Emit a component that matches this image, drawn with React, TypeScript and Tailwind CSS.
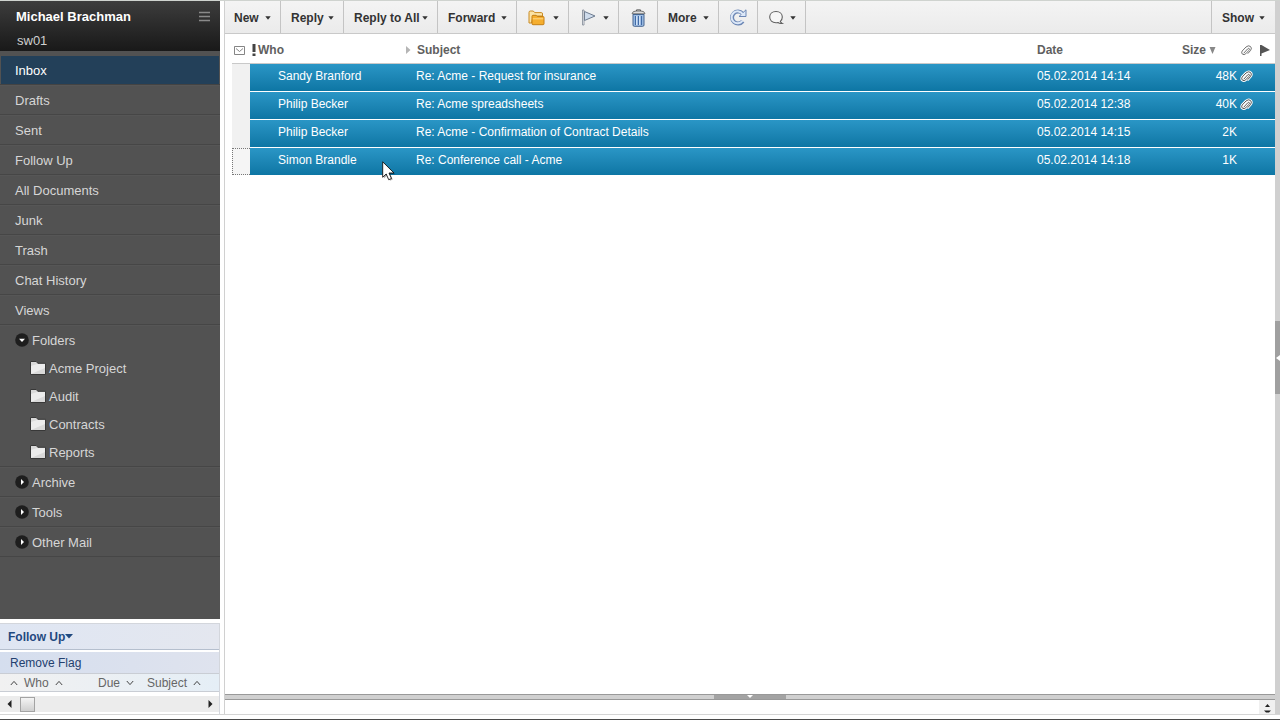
import type { ReactNode } from "react";

const views = [
  "Drafts",
  "Sent",
  "Follow Up",
  "All Documents",
  "Junk",
  "Trash",
  "Chat History",
  "Views",
];
const folders = ["Acme Project", "Audit", "Contracts", "Reports"];
const closedGroups = ["Archive", "Tools", "Other Mail"];

const mails = [
  { who: "Sandy Branford", subject: "Re: Acme - Request for insurance", date: "05.02.2014 14:14", size: "48K", clip: true },
  { who: "Philip Becker", subject: "Re: Acme spreadsheets", date: "05.02.2014 12:38", size: "40K", clip: true },
  { who: "Philip Becker", subject: "Re: Acme - Confirmation of Contract Details", date: "05.02.2014 14:15", size: "2K", clip: false },
  { who: "Simon Brandle", subject: "Re: Conference call - Acme", date: "05.02.2014 14:18", size: "1K", clip: false },
];

function Caret() {
  return (
    <svg width="6" height="4" viewBox="0 0 6 4" className="shrink-0" aria-hidden="true">
      <path d="M0.300 0.300h5.400L3 3.700z" fill="#333" />
    </svg>
  );
}

function ToolButton({ label, children, menu = true, className = "" }: {
  label: string;
  children?: ReactNode;
  menu?: boolean;
  className?: string;
}) {
  return (
    <button
      type="button"
      aria-label={label}
      className={`flex h-8 items-center justify-between border-[#c4c4c4] pt-px pr-[9px] whitespace-nowrap ${className}`}
    >
      {children ?? label}
      {menu && <Caret />}
    </button>
  );
}

function FolderStackIcon() {
  return (
    <svg width="17" height="16" viewBox="0 0 17 16" aria-hidden="true">
      <path d="M1 13V2.5Q1 1 2.3 1h3l1.4 1.6h6.8Q14.5 2.600 14.500 4v2H5L3.500 13z" fill="#fbe3a6" stroke="#c98a22" />
      <path d="M4 13.800V6.300Q4 5.300 5 5.300h3.200l1 1.200h6Q16 6.500 16 7.500v6.300q0 .900-1 .900H5q-1 0-1-.900z" fill="#f5ae2e" stroke="#c47f16" />
      <path d="M4.800 8.800h10.500" stroke="#ffd98a" />
    </svg>
  );
}

function FlagIcon() {
  return (
    <svg width="16" height="17" viewBox="0 0 16 17" aria-hidden="true">
      <path d="M3.500 2.500L14 7 3.500 11.500z" fill="#cfdcec" stroke="#6d7c90" />
      <path d="M1.500 1h1.500v15H1.500z" fill="#f5f7fa" stroke="#7d8793" strokeWidth=".8" />
    </svg>
  );
}

function TrashIcon() {
  return (
    <svg width="15" height="18" viewBox="0 0 15 18" aria-hidden="true">
      <path d="M5.500 2V.900h4V2" fill="none" stroke="#555" />
      <path d="M1 4.800Q1.500 2 5 2h5q3.500 0 4 2.800z" fill="#dedede" stroke="#666" strokeWidth=".9" />
      <path d="M2 5.500h11V16q0 1.300-1.300 1.300H3.300Q2 17.300 2 16z" fill="#9fbfe6" stroke="#46658f" />
      <path d="M4.500 7v9M7.500 7v9M10.500 7v9" stroke="#416ba6" strokeWidth="1.200" />
      <path d="M5.700 7v9M8.700 7v9" stroke="#dceafb" />
    </svg>
  );
}

function RefreshIcon() {
  return (
    <svg width="18" height="17" viewBox="0 0 18 17" aria-hidden="true">
      <path d="M13.800 12.200A6 6 0 1 1 13.500 4.500" fill="none" stroke="#6c87b5" strokeWidth="4" />
      <path d="M10 7.500h7V.800z" fill="#dce8f8" stroke="#6c87b5" strokeWidth="1" />
      <path d="M13.400 11.900A6 6 0 1 1 13.700 5.200" fill="none" stroke="#dce8f8" strokeWidth="2" />
    </svg>
  );
}

function ChatIcon() {
  return (
    <svg width="17" height="16" viewBox="0 0 17 16" aria-hidden="true">
      <path d="M8 1.500c3.800 0 6.300 2.300 6.300 5.600 0 1.900-.800 3.400-2 4.300.300.900.800 1.600 1.900 2-1.500.300-3 .100-4.200-.900-.600.200-1.300.300-2 .300C4.200 12.800 1.700 10.400 1.700 7.100S4.200 1.500 8 1.500z" fill="#f7f7f7" stroke="#5f5f5f" strokeWidth="1.100" />
    </svg>
  );
}

function PaperclipIcon({ halo = false }: { halo?: boolean }) {
  const d = "M4.300 9.600L8.300 5.200Q9.500 4.200 10 5T9.600 6.800L6.200 10.500Q4.300 12.200 2.700 11T2.300 7.600L6.500 3.200Q9.200 1 11.200 2.600T11.500 6.800L8.600 10.100";
  return (
    <svg width="13" height="13" viewBox="0 0 14 14" className="block" aria-hidden="true">
      {halo && <path d={d} fill="#e9eef1" stroke="#fff" strokeWidth="2.800" strokeLinecap="round" />}
      <path d={d} fill="none" stroke={halo ? "#4a4a4a" : "#666"} strokeWidth="1" strokeLinecap="round" />
    </svg>
  );
}

function Twisty({ open }: { open: boolean }) {
  return (
    <svg width="14" height="14" viewBox="0 0 14 14" className="shrink-0" aria-hidden="true">
      <circle cx="7" cy="7" r="6.800" fill="#1e1e1e" />
      <path d={open ? "M4 5.800h6L7 9z" : "M6 4v6l3-3z"} fill="#fff" />
    </svg>
  );
}

function FolderIcon() {
  return (
    <svg width="16" height="14" viewBox="0 0 16 14" aria-hidden="true">
      <path d="M.500 13.500V.500h5.800l1.500 1.800h7.700v11.200z" fill="#d9d9d9" stroke="#383838" />
      <path d="M1 13V5l6-2h8v4z" fill="#ececec" />
    </svg>
  );
}

function Chevron({ down = false }: { down?: boolean }) {
  return (
    <svg width="8" height="6" viewBox="0 0 8 6" aria-hidden="true">
      <path d={down ? "M.800 1L4 4.600 7.200 1" : "M.800 5L4 1.400 7.200 5"} fill="none" stroke="#444" />
    </svg>
  );
}

function Sidebar() {
  return (
    <aside className="flex w-[220px] shrink-0 flex-col">
      <header className="flex h-[50px] flex-col bg-linear-to-b from-[#3d3d3d] to-[#191919] text-white">
        <div className="flex h-[30px] items-center justify-between pt-px pr-[10px] pl-4">
          <h1 className="text-[13px] font-bold">Michael Brachman</h1>
          <button type="button" aria-label="Menu">
            <svg width="11" height="11" viewBox="0 0 11 11" className="block" aria-hidden="true">
              <path d="M0 1.500h11M0 5.500h11M0 9.500h11" stroke="#8a8a8a" strokeWidth="1.600" />
            </svg>
          </button>
        </div>
        <div className="flex h-5 items-center pl-[17px] text-[13px] text-[#d0d0d0]">sw01</div>
      </header>

      <nav className="grow bg-[#525252] pt-1 text-[13px] text-[#d6d6d6]">
        <ul>
          <li className="border-b border-[#434343] px-px pt-px">
            <a href="#inbox" className="flex h-7 items-center bg-[#234059] pt-px pl-[14px] text-white">Inbox</a>
          </li>
          {views.map((name) => (
            <li key={name} className="border-t border-b border-t-[#565656] border-b-[#464646]">
              <a href="#view" className="flex h-7 items-center pt-[2px] pl-[15px]">{name}</a>
            </li>
          ))}
          <li className="border-t border-b border-t-[#565656] border-b-[#464646]">
            <button type="button" aria-expanded="true" className="flex h-7 w-full items-center gap-[3px] pl-[15px]">
              <Twisty open />
              <span className="pt-[2px]">Folders</span>
            </button>
            <ul>
              {folders.map((name) => (
                <li key={name}>
                  <a href="#folder" className="flex h-7 items-center gap-[3px] pl-[30px]">
                    <FolderIcon />
                    <span className="pt-[2px]">{name}</span>
                  </a>
                </li>
              ))}
            </ul>
          </li>
          {closedGroups.map((name) => (
            <li key={name} className="border-t border-b border-t-[#565656] border-b-[#464646]">
              <button type="button" aria-expanded="false" className="flex h-7 w-full items-center gap-[3px] pl-[15px]">
                <Twisty open={false} />
                <span className="pt-[2px]">{name}</span>
              </button>
            </li>
          ))}
        </ul>
      </nav>

      <section className="mt-1 flex flex-col border-t border-r border-[#d3d6dc] bg-white">
        <button type="button" className="flex h-[26px] items-center border-b border-[#b5bfce] bg-linear-to-r from-[#dfe6f3] to-[#e4e7ef] pl-2 text-[12px] font-bold text-[#1f497f]">
          Follow Up
          <svg width="8" height="5" viewBox="0 0 8 5" aria-hidden="true">
            <path d="M0 0h8L4 4.500z" fill="#1f497f" />
          </svg>
        </button>
        <button type="button" className="mt-[2px] flex h-[22px] items-center border-b border-[#c9cdd4] bg-linear-to-r from-[#d5deee] to-[#dfe3ee] pl-[10px] text-[12px] text-[#23406e]">
          Remove Flag
        </button>
        <div className="flex h-[18px] items-center border-b border-[#c9cdd4] bg-linear-to-r from-[#f1f1f1] to-[#e5eef6] pl-[10px] text-[12px] text-[#666]">
          <div className="flex w-[88px] items-center gap-[6px]"><Chevron />Who<Chevron /></div>
          <div className="flex w-[49px] items-center gap-[6px]">Due<Chevron down /></div>
          <div className="flex items-center gap-[6px]">Subject<Chevron /></div>
        </div>
        <div className="mt-1 mb-[2px] flex h-4 items-center bg-[#ececec] pr-[6px] pl-[7px]">
          <button type="button" aria-label="Scroll left">
            <svg width="5" height="8" viewBox="0 0 5 8" className="block" aria-hidden="true"><path d="M4.500 0v8L.500 4z" fill="#222" /></svg>
          </button>
          <div className="ml-2 h-[15px] w-[15px] border border-[#a3a3a3] bg-linear-to-b from-[#f4f4f4] to-[#cfcfcf]" />
          <button type="button" aria-label="Scroll right" className="ml-auto">
            <svg width="5" height="8" viewBox="0 0 5 8" className="block" aria-hidden="true"><path d="M.500 0v8L4.500 4z" fill="#222" /></svg>
          </button>
        </div>
      </section>
    </aside>
  );
}

function Toolbar() {
  return (
    <div className="flex h-[33px] border-b border-[#c9c9c9] bg-linear-to-b from-[#f4f4f4] to-[#ebebeb] text-[12px] font-bold text-[#333]">
      <ToolButton label="New" className="w-14 border-r pl-[9px]" />
      <ToolButton label="Reply" className="w-[63px] border-r pl-[10px]" />
      <ToolButton label="Reply to All" className="w-[94px] border-r pl-[10px]" />
      <ToolButton label="Forward" className="w-[79px] border-r pl-[10px]" />
      <ToolButton label="Move to folder" className="w-[52px] border-r pl-[11px]"><FolderStackIcon /></ToolButton>
      <ToolButton label="Flag" className="w-[50px] border-r pl-3"><FlagIcon /></ToolButton>
      <ToolButton label="Delete" menu={false} className="w-[39px] border-r pl-3"><TrashIcon /></ToolButton>
      <ToolButton label="More" className="w-[61px] border-r pl-[10px]" />
      <ToolButton label="Refresh" menu={false} className="w-[39px] border-r pl-[10px]"><RefreshIcon /></ToolButton>
      <ToolButton label="Chat" className="w-12 border-r pl-[10px]"><ChatIcon /></ToolButton>
      <ToolButton label="Show" className="mr-px ml-auto w-[63px] border-l pl-[10px]" />
    </div>
  );
}

function MailTable() {
  const head = "border-b border-[#c9c9c9] pt-[3px] pr-0 pb-0";
  return (
    <table className="w-full table-fixed border-separate border-spacing-0 text-left text-[12px]">
      <colgroup>
        <col className="w-[18px]" />
        <col className="w-[158px]" />
        <col />
        <col className="w-[120px]" />
        <col className="w-[88px]" />
        <col className="w-[20px]" />
        <col className="w-[18px]" />
      </colgroup>
      <thead className="text-[#606060]">
        <tr className="h-[30px]">
          <th className={`${head} pl-[2px]`} aria-label="Status">
            <svg width="11" height="9" viewBox="0 0 11 9" className="block" aria-hidden="true">
              <path d="M.500 .500h10v8H.500zM2 2.500L5.500 5.500l3.500-3" fill="none" stroke="#777" strokeWidth=".9" />
            </svg>
          </th>
          <th className={`${head} pl-[2px]`}>
            <div className="flex items-center">
              <svg width="4" height="12" viewBox="0 0 4 12" className="mr-[2px]" aria-hidden="true">
                <path d="M.500 0h3v8h-3zM.500 9.500h3V12h-3z" fill="#444" />
              </svg>
              Who
              <svg width="5" height="8" viewBox="0 0 5 8" className="mr-[-3px] ml-auto" aria-hidden="true"><path d="M0 0v8l4.500-4z" fill="#b5b5b5" /></svg>
            </div>
          </th>
          <th className={`${head} pl-[9px]`}>Subject</th>
          <th className={`${head} pl-2`}>Date</th>
          <th className={`${head} pl-[33px]`}>
            <div className="flex items-center gap-[3px]">
              Size
              <svg width="7" height="7" viewBox="0 0 7 7" aria-hidden="true"><path d="M.500 0h6L3.500 7z" fill="#888" /></svg>
            </div>
          </th>
          <th className={`${head} pl-[3px]`} aria-label="Attachment"><PaperclipIcon /></th>
          <th className={`${head} pl-[3px]`} aria-label="Flag">
            <svg width="10" height="11" viewBox="0 0 10 11" className="block" aria-hidden="true"><path d="M0 0h1.500L10 5 1.500 8.500V11H0z" fill="#555" /></svg>
          </th>
        </tr>
      </thead>
      <tbody className="text-white">
        {mails.map((mail, i) => {
          const last = i === mails.length - 1;
          const cell = last
            ? "bg-linear-to-b from-[#2a96c6] to-[#0d76a4] pt-0 pr-0 pb-[3px]"
            : "border-b border-white bg-linear-to-b from-[#2a96c6] to-[#0d76a4] pt-0 pr-0 pb-[3px]";
          return (
            <tr key={mail.date} className={last ? "h-[27px]" : "h-7"}>
              <td className={last ? "border border-r-0 border-dotted border-[#777] bg-[#f5f5f5] p-0" : "bg-[#f1f1f1] p-0"} />
              <td className={`${cell} pl-7`}>{mail.who}</td>
              <td className={`${cell} truncate pl-2`}>{mail.subject}</td>
              <td className={`${cell} pl-2 whitespace-nowrap`}>{mail.date}</td>
              <td className={`${cell} text-right`}>{mail.size}</td>
              <td className={`${cell} pl-[3px]`}>{mail.clip && <PaperclipIcon halo />}</td>
              <td className={cell} />
            </tr>
          );
        })}
      </tbody>
    </table>
  );
}

export default function App() {
  return (
    <div className="relative flex min-h-screen flex-col border-t border-b border-t-[#cfd3cf] border-b-[#4a4a4a] bg-white pb-1 font-['Liberation_Sans',Arial,sans-serif]">
      <div className="flex grow gap-1 border-b border-[#d5d5d5]">
        <Sidebar />
        <main className="flex min-w-0 grow flex-col border-l border-[#d0d0d0]">
          <Toolbar />
          <div className="grow pl-[7px]">
            <MailTable />
          </div>
          <div className="flex h-[6px] justify-center border-y border-[#999] bg-[#d0d0d0]">
            <div className="flex w-[72px] justify-center bg-[#a3a3a3]">
              <svg width="6" height="3" viewBox="0 0 6 3" aria-hidden="true"><path d="M0 0h6L3 3z" fill="#fff" /></svg>
            </div>
          </div>
          <div className="flex h-[14px] justify-end">
            <div className="flex w-4 flex-col items-center justify-end gap-[3px] bg-[#f0f0f0] pb-px">
              <svg width="5" height="3" viewBox="0 0 5 3" aria-hidden="true"><path d="M0 3h5L2.500 0z" fill="#222" /></svg>
              <svg width="7" height="3" viewBox="0 0 7 3" aria-hidden="true"><path d="M0 .500h7L5 2.500H2z" fill="#222" /></svg>
            </div>
          </div>
        </main>
        <div className="-ml-1 flex w-[5px] shrink-0 flex-col justify-center bg-[#d0d0d0]">
          <div className="flex h-[73px] items-center justify-end bg-[#a0a0a0]">
            <svg width="4" height="6" viewBox="0 0 4 6" aria-hidden="true"><path d="M4 0v6L0 3z" fill="#fff" /></svg>
          </div>
        </div>
      </div>
      <svg width="14" height="22" viewBox="0 0 14 22" className="pointer-events-none absolute top-[160px] left-[382px]" aria-hidden="true">
        <path d="M2 2v15.500l3.500-3.300 2.500 5.600 2.800-1.200-2.500-5.400h5z" fill="#000" opacity=".3" />
        <path d="M.700 .800v15.500l3.500-3.300 2.500 5.700 2.800-1.200L7 12h5z" fill="#fff" stroke="#111" strokeWidth=".9" />
      </svg>
    </div>
  );
}
